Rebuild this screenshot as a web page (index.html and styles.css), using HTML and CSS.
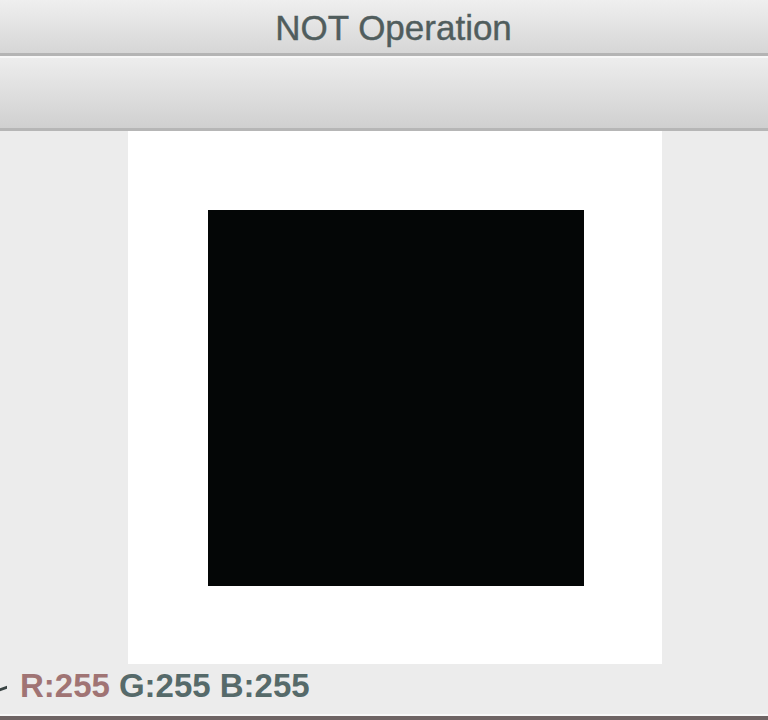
FILE: index.html
```html
<!DOCTYPE html>
<html>
<head>
<meta charset="utf-8">
<link rel="stylesheet" href="styles.css">
</head>
<body>
<div class="window">
  <div class="titlebar"><span class="title">NOT Operation</span></div>
  <div class="toolbar"></div>
  <div class="content">
    <div class="canvas"><div class="square"></div></div>
    <div class="status">
      <span class="cursor-mark"></span>
      <span class="r">R:255</span>
      <span class="gb">G:255 B:255</span>
    </div>
  </div>
  <div class="bottom"></div>
</div>
</body>
</html>
```
FILE: styles.css
```css
html, body {
  margin: 0;
  padding: 0;
  background: #ececec;
  overflow: hidden;
}
.window {
  width: 768px;
  height: 720px;
  display: flex;
  flex-direction: column;
  background: #ececec;
}
.titlebar {
  height: 53px;
  border-bottom: 3px solid #b4b4b4;
  background: linear-gradient(#efefef, #d6d6d6);
  display: flex;
  align-items: center;
  justify-content: center;
}
.title {
  font-family: "Liberation Sans", Arial, sans-serif;
  font-size: 35px;
  color: #505d5d;
  margin-left: 19px;
  margin-top: 2px;
  -webkit-text-stroke: 0.4px #505d5d;
}
.toolbar {
  height: 70px;
  border-top: 2px solid #f7f7f7;
  border-bottom: 3px solid #b6b6b6;
  background: linear-gradient(#ededed, #d0d0d0);
}
.content {
  flex: 1;
  display: flex;
  flex-direction: column;
}
.canvas {
  margin-left: 128px;
  width: 534px;
  height: 533px;
  background: #ffffff;
  box-sizing: border-box;
  padding: 79px 0 0 80px;
}
.square {
  width: 376px;
  height: 376px;
  background: #040606;
}
.status {
  height: 50px;
  display: flex;
  align-items: center;
  gap: 9px;
  font-family: "Liberation Sans Narrow", "Liberation Sans", Arial, sans-serif;
  font-stretch: condensed;
  font-weight: bold;
  font-size: 33px;
  padding-bottom: 6px;
  box-sizing: border-box;
}
.cursor-mark {
  width: 7px;
  height: 3px;
  background: #3a4444;
  margin-top: 4px;
  margin-right: 4px;
  transform: skewY(-20deg);
}
.r { color: #a07474; }
.gb { color: #566a6a; }
.bottom {
  height: 6px;
  border-top: 2px solid #f8f8f8;
  background: #6e6464;
  box-sizing: border-box;
}
```
